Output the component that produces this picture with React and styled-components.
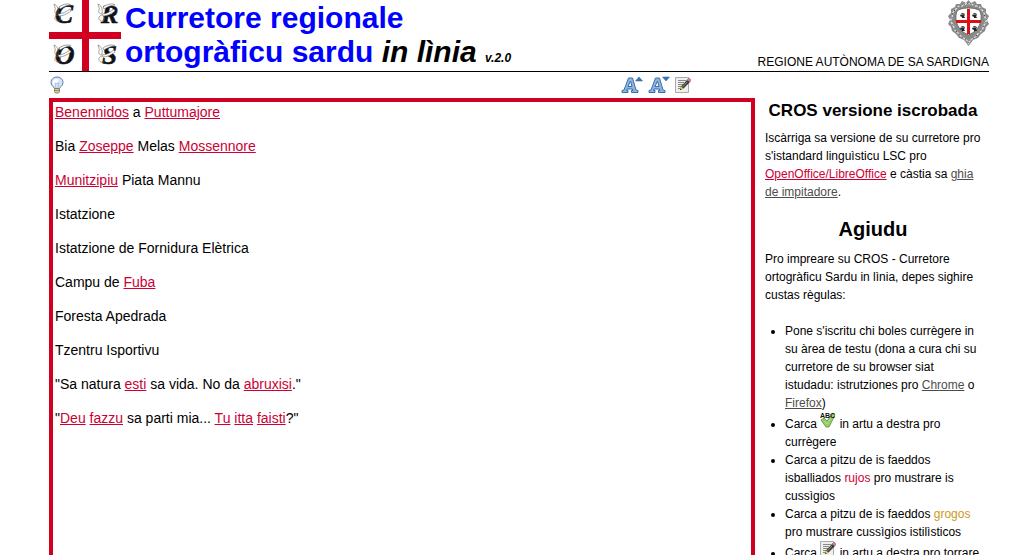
import React from 'react'
import styled, {createGlobalStyle} from 'styled-components'

const COLOR = {
    RED: '#d20020',
    ERROR: '#cc0033',
    STYLE: '#cc9922',
    TITLE: '#0000ff',
    LINK: '#4d4d4d'
}

const GlobalStyle = createGlobalStyle`
    body {
        margin: 0;
        background: white;
        color: black;
        font-family: "Liberation Sans", Arial, Helvetica, sans-serif;
        font-size: 12px;
        line-height: 18px;
    }
`

const Page = styled.div`
    display: flex;
    flex-direction: column;
    min-height: 100vh;
    padding: 0 35px 0 49px;
`

const Header = styled.header`
    display: flex;
    border-bottom: 1px solid black;
`

const Title = styled.h1`
    flex: 1;
    max-width: 420px;
    margin: 1px 0 0 4px;
    font-size: 30px;
    line-height: 34px;
    color: ${COLOR.TITLE};
`

const Online = styled.em`
    color: black;
`

const Version = styled.small`
    font-size: 12px;
    line-height: 12px;
`

const Region = styled.div`
    display: flex;
    flex-direction: column;
    align-items: flex-end;
    justify-content: space-between;
    margin-left: auto;
`

const Main = styled.main`
    flex: 1;
    display: grid;
    grid-template-columns: minmax(0, 1fr) 216px;
    grid-template-rows: 26px 1fr;
    column-gap: 10px;
    padding-right: 8px;
`

const Toolbar = styled.div`
    display: flex;
    align-items: center;
    gap: 4px;
    padding-right: 64px;
`

const ToolButton = styled.button`
    display: flex;
    margin: 0 ${props => props.$push ? 'auto' : '0'} 0 0;
    padding: 0;
    border: 0;
    background: none;
    cursor: pointer;
`

const Editor = styled.div`
    grid-row: 2;
    box-sizing: border-box;
    padding: 2px;
    border: 4px solid ${COLOR.RED};
    font-size: 14px;
    line-height: 17px;
`

const Line = styled.p`
    margin: 0 0 17px;
`

const ErrorLink = styled.a`
    color: ${COLOR.ERROR};
`

const Link = styled.a`
    color: ${COLOR.LINK};
`

const Sidebar = styled.aside`
    grid-column: 2;
    grid-row: 2;
`

const Heading = styled.h2`
    margin: ${props => props.$large ? '16px 0 9px' : '0 0 6px'};
    font-size: ${props => props.$large ? '20px' : '17px'};
    line-height: ${props => props.$large ? '24px' : '25px'};
    text-align: center;
    white-space: nowrap;
`

const Paragraph = styled.p`
    margin: 0;
`

const Rules = styled.ul`
    margin: 18px 0;
    padding-left: 20px;
`

const Mark = styled.span`
    color: ${props => props.color};
`

// the bandage tied round each letter
const Ribbon = ({x, y}) => (
    <g transform={`translate(${x} ${y})`} fill="none" stroke="#666" strokeWidth=".6">
        <path d="M5 11C9 11 13 9 17 6L18 8C14 11 10 13 6 13Z" fill="white" />
        <path d="M1 1C4 2 6 6 5 10C3 12 1 9 2 7C3 5 1 3 1 1Z" />
        <path d="M6 4C10 1 16 0 18 2C14 2 10 4 7 6Z" fill="white" />
        <path d="M5 12C1 13 1 17 4 18C7 19 9 16 6 13" />
    </g>
)

const Logo = () => (
    <svg width="72" height="71" viewBox="0 0 72 71" role="img" aria-label="CROS">
        <path d="M33 0h7v71h-7zM0 32h72v7H0z" fill={COLOR.RED} />
        <g fontFamily="Liberation Serif, serif" fontWeight="bold" fontStyle="italic" fontSize="27" fill="#111" stroke="#111" strokeWidth=".6">
            <text x="6" y="23">C</text>
            <text x="52" y="23" fontSize="26">R</text>
            <text x="6" y="64">O</text>
            <text x="53" y="64">S</text>
        </g>
        <Ribbon x={4} y={3} />
        <Ribbon x={48} y={3} />
        <Ribbon x={4} y={44} />
        <Ribbon x={48} y={44} />
    </svg>
)

const Moor = ({x, y}) => (
    <g transform={`translate(${x} ${y})`}>
        <path d="M1 1C2-1 5 0 5 2L4 3L5 5H2L2 4L0 3Z" fill="#222" />
        <path d="M1 1.500L5 1" stroke="#ddd" strokeWidth=".6" />
    </g>
)

const Crest = () => (
    <svg width="41" height="46" viewBox="0 0 41 46" role="img" aria-label="Regione Autònoma de sa Sardigna">
        <path d="M20.500 0L23 3L27 1L29 4L33 4L34 7L38 9L38 13L41 16L39 20L41 24L38 27L37 31L33 34L30 38L25 40L20.500 46L16 40L11 38L8 34L4 31L3 27L0 24L2 20L0 16L3 13L3 9L7 7L8 4L12 4L14 1L18 3Z" fill="#8a8a8a" />
        <path d="M20.500 4C17 2 16 7 13 6C9 5 9 9 6 11C3 13 6 16 3 19C1 22 6 24 6 28C6 32 10 31 12 35C14 39 18 37 20.500 43C23 37 27 39 29 35C31 31 35 32 35 28C35 24 40 22 38 19C35 16 38 13 35 11C32 9 32 5 28 6C25 7 24 2 20.500 4Z" fill="none" stroke="#e4e4e4" strokeWidth="1.300" />
        <path d="M20.500 4C17 2 16 7 13 6C9 5 9 9 6 11C3 13 6 16 3 19C1 22 6 24 6 28C6 32 10 31 12 35C14 39 18 37 20.500 43C23 37 27 39 29 35C31 31 35 32 35 28C35 24 40 22 38 19C35 16 38 13 35 11C32 9 32 5 28 6C25 7 24 2 20.500 4Z" fill="none" stroke="#444" strokeDasharray="1.500 2.500" />
        <path d="M20.500 8C26 8 31 9 32.500 12C35 21 31 31 20.500 35C10 31 6 21 8.500 12C10 9 15 8 20.500 8Z" fill="white" stroke="#666" />
        <path d="M19 9h3v25h-3zM8 20h25v3H8z" fill="#dd1018" />
        <Moor x={12} y={13} />
        <Moor x={24} y={13} />
        <Moor x={12} y={26} />
        <Moor x={24} y={26} />
    </svg>
)

const BulbIcon = () => (
    <svg width="16" height="18" viewBox="0 0 16 18" aria-hidden="true">
        <path d="M5.500 12.500C5.500 11 2 10 2 6.500C2 3 5 1 8 1S14 3 14 6.500C14 10 10.500 11 10.500 12.500Z" fill="#d5e4f6" stroke="#6079a8" />
        <path d="M3.500 6C4.500 3 8 2 10 4L5 10Z" fill="white" />
        <path d="M7 12L6 7L8 8L10 7L9 12" fill="none" stroke="#a5b8d6" strokeWidth=".8" />
        <path d="M5.500 12.500h5v3L9.500 17H6.500L5.500 15.500Z" fill="#d8cf90" stroke="#77745c" strokeWidth=".8" />
        <path d="M5.500 14.500h5" stroke="#77745c" strokeWidth=".7" />
    </svg>
)

// letter A with a small arrow, up or down
const SizeIcon = ({down}) => (
    <svg width="23" height="18" viewBox="0 0 23 18" aria-hidden="true">
        <path d="M1 16.500V14.500L3 14L7.500 2H11.500L15 14L17 14.500V16.500H10.500V14.500H12L11.500 13H6L5.500 14.500H7V16.500ZM7 10.500H11L9.500 5Z" fill="#8fb6e0" fillRule="evenodd" stroke="#3a6da8" />
        <path d={down ? 'M14.500 1h7l-3.500 4z' : 'M14.500 5h7l-3.500-4z'} fill="#3f74b5" stroke="#2d5c96" strokeWidth=".5" />
    </svg>
)

const EditIcon = () => (
    <svg width="16" height="16" viewBox="0 0 16 16" aria-hidden="true">
        <path d="M.5.5h13v15H.5z" fill="#efefef" stroke="#aaa" />
        <path d="M3 3.500h8M3 5.500h6M3 7.500h5M3 9.500h3M3 11.500h2" stroke="#888" />
        <path d="M5 13L6 9.500L12 3L15 5L8 12Z" fill="#3a3934" />
        <path d="M7.500 10L12 5" stroke="#99946c" strokeWidth="1" />
        <path d="M5 13L6 9.500L8.500 11.500Z" fill="#e5d64a" />
        <path d="M5 13L5.500 11.500L6.500 12.500Z" fill="#111" />
        <path d="M12 3L14 1L16 3L15 5Z" fill="#d77fa2" stroke="#8b4966" strokeWidth=".5" />
    </svg>
)

const CheckIcon = () => (
    <svg width="16" height="16" viewBox="0 0 16 16" role="img" aria-label="ABC">
        <path d="M1 8L4 6L7 9L13 1L15 3L9 15H6Z" fill="#98cb68" stroke="#5c9138" strokeWidth=".8" />
        <path d="M4 9L7 12L13 4" fill="none" stroke="#b5dc8c" />
        <text x="0" y="6" fontFamily="Liberation Sans, sans-serif" fontSize="7" fontWeight="bold" fill="#111">ABC</text>
    </svg>
)

const Err = ({children}) => <ErrorLink href="#cussigios">{children}</ErrorLink>

const App = () => (
    <>
        <GlobalStyle />
        <Page>
            <Header>
                <Logo />
                <Title>
                    Curretore regionale ortogràficu sardu <Online>in lìnia <Version>v.2.0</Version></Online>
                </Title>
                <Region>
                    <Crest />
                    <span>REGIONE AUTÒNOMA DE SA SARDIGNA</span>
                </Region>
            </Header>
            <Main>
                <Toolbar>
                    <ToolButton $push aria-label="Agiudu"><BulbIcon /></ToolButton>
                    <ToolButton aria-label="Testu prus mannu"><SizeIcon /></ToolButton>
                    <ToolButton aria-label="Testu prus piticu"><SizeIcon down /></ToolButton>
                    <ToolButton aria-label="Torra a su testu"><EditIcon /></ToolButton>
                </Toolbar>
                <Editor>
                    <Line><Err>Benennidos</Err> a <Err>Puttumajore</Err></Line>
                    <Line>Bia <Err>Zoseppe</Err> Melas <Err>Mossennore</Err></Line>
                    <Line><Err>Munitzipiu</Err> Piata Mannu</Line>
                    <Line>Istatzione</Line>
                    <Line>Istatzione de Fornidura Elètrica</Line>
                    <Line>Campu de <Err>Fuba</Err></Line>
                    <Line>Foresta Apedrada</Line>
                    <Line>Tzentru Isportivu</Line>
                    <Line>"Sa natura <Err>esti</Err> sa vida. No da <Err>abruxisi</Err>."</Line>
                    <Line>
                        "<Err>Deu</Err> <Err>fazzu</Err> sa parti mia... <Err>Tu</Err> <Err>itta</Err> <Err>faisti</Err>?"
                    </Line>
                </Editor>
                <Sidebar>
                    <Heading>CROS versione iscrobada</Heading>
                    <Paragraph>
                        Iscàrriga sa versione de su curretore pro s'istandard linguìsticu LSC
                        pro <ErrorLink href="#office">OpenOffice/LibreOffice</ErrorLink> e càstia
                        sa <Link href="#ghia">ghia de impitadore</Link>.
                    </Paragraph>
                    <Heading $large>Agiudu</Heading>
                    <Paragraph>
                        Pro impreare su CROS - Curretore ortogràficu Sardu in lìnia, depes sighire custas règulas:
                    </Paragraph>
                    <Rules>
                        <li>
                            Pone s'iscritu chi boles currègere in su àrea de testu (dona a cura chi su
                            curretore de su browser siat istudadu: istrutziones
                            pro <Link href="#chrome">Chrome</Link> o <Link href="#firefox">Firefox</Link>)
                        </li>
                        <li>Carca <CheckIcon /> in artu a destra pro currègere</li>
                        <li>Carca a pitzu de is faeddos isballiados <Mark color={COLOR.ERROR}>rujos</Mark> pro mustrare is cussìgios</li>
                        <li>Carca a pitzu de is faeddos <Mark color={COLOR.STYLE}>grogos</Mark> pro mustrare cussìgios istilìsticos</li>
                        <li>Carca <EditIcon /> in artu a destra pro torrare</li>
                    </Rules>
                </Sidebar>
            </Main>
        </Page>
    </>
)

export default App
